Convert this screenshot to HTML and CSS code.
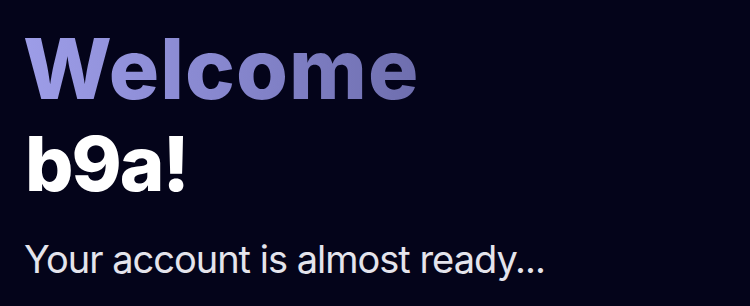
FILE: index.html
```html
<!DOCTYPE html>
<html lang="en">
<head>
<meta charset="utf-8">
<title>Welcome</title>
<link rel="stylesheet" href="styles.css">
</head>
<body>
<main class="screen">
  <h1 class="title">
    <span class="welcome">Welcome</span>
    <span class="name">b9a!</span>
  </h1>
  <p class="subtitle">Your account is almost ready...</p>
</main>
</body>
</html>
```

FILE: styles.css
```css
html, body {
  margin: 0;
  padding: 0;
  background: #04041a;
}
.screen {
  width: 750px;
  height: 306px;
  box-sizing: border-box;
  padding: 22px 0 0 23px;
  display: flex;
  flex-direction: column;
  background: #04041a;
}
.title {
  margin: 0;
  display: flex;
  flex-direction: column;
  font-family: "Inter", "DejaVu Sans", sans-serif;
  font-weight: 800;
}
.welcome {
  align-self: flex-start;
  font-size: 84px;
  line-height: 94px;
  letter-spacing: 1px;
  background: linear-gradient(90deg, #9d9de8 0%, #8585cc 55%, #6e6eae 100%);
  -webkit-background-clip: text;
  background-clip: text;
  color: transparent;
}
.name {
  margin-left: 2px;
  font-size: 76px;
  line-height: 94px;
  letter-spacing: -2px;
  color: #ffffff;
}
.subtitle {
  margin: 27px 0 0 1px;
  font-family: "Inter", "Liberation Sans", sans-serif;
  font-size: 38px;
  line-height: 44px;
  letter-spacing: -1px;
  color: #e4e4ec;
  font-weight: 400;
}
```
